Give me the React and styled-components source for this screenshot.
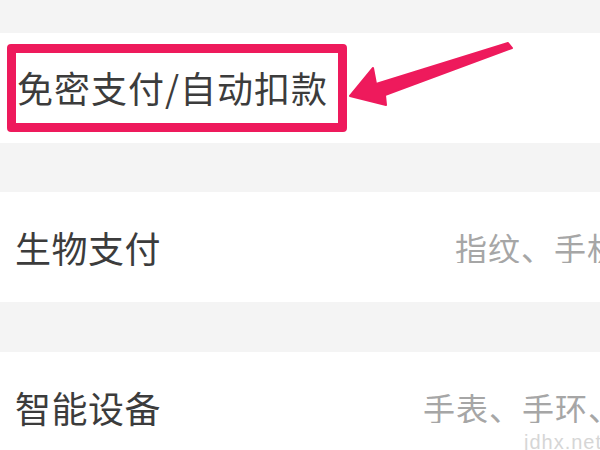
import React from 'react'
import styled, { createGlobalStyle } from 'styled-components'

const GlobalStyle = createGlobalStyle`
  html, body {
    margin: 0;
    padding: 0;
    background: #f4f4f4;
  }
  body {
    font-family: 'Noto Sans CJK SC', 'Noto Sans', sans-serif;
  }
`

const Page = styled.div`
  width: 600px;
  height: 450px;
  overflow: hidden;
  position: relative;
  display: flex;
  flex-direction: column;
  background: #f4f4f4;
`

const Row = styled.div`
  position: relative;
  flex-shrink: 0;
  height: ${(p) => p.h}px;
  margin-top: ${(p) => p.gap}px;
  background: #ffffff;
  display: flex;
  align-items: center;
  padding-left: ${(p) => (p.boxed ? 7 : 15)}px;
  overflow: hidden;
`

const Label = styled.div`
  font-size: 36px;
  line-height: 1;
  color: #3c3c3c;
  white-space: nowrap;
  letter-spacing: ${(p) => (p.wide ? 1 : 0.5)}px;
`

const HighlightBox = styled.div`
  box-sizing: border-box;
  width: 340px;
  height: 88px;
  border: 9px solid #ee1a5c;
  border-radius: 4px;
  display: flex;
  align-items: center;
  padding-left: 1px;
  padding-bottom: 3px;
`

const Value = styled.div`
  margin-left: auto;
  width: ${(p) => p.w}px;
  overflow: hidden;
  white-space: nowrap;
  font-size: 32px;
  line-height: 1;
  color: #a6a6a6;
  letter-spacing: 1px;
`

const ArrowSvg = styled.svg`
  position: absolute;
  left: 0;
  top: 0;
  pointer-events: none;
`

const Watermark = styled.div`
  position: absolute;
  right: -2px;
  bottom: -4px;
  font-family: 'Liberation Sans', Arial, sans-serif;
  font-size: 20px;
  color: #d6d6d6;
  letter-spacing: 1px;
`

export default function App() {
  return (
    <>
      <GlobalStyle />
      <Page>
        <Row h={110} gap={33} boxed>
          <HighlightBox>
            <Label wide>免密支付/自动扣款</Label>
          </HighlightBox>
          <ArrowSvg width="600" height="110" viewBox="0 33 600 110">
            <polygon
              points="350,96 373,68 376,84 508,43 512,48 385,95 386,105"
              fill="#ee1a5c"
              stroke="#ee1a5c"
              strokeWidth="2"
              strokeLinejoin="round"
            />
          </ArrowSvg>
        </Row>
        <Row h={110} gap={49}>
          <Label>生物支付</Label>
          <Value w={145}>指纹、手机</Value>
        </Row>
        <Row h={110} gap={50}>
          <Label>智能设备</Label>
          <Value w={177}>手表、手环、手机</Value>
        </Row>
        <Watermark>jdhx.net</Watermark>
      </Page>
    </>
  )
}
